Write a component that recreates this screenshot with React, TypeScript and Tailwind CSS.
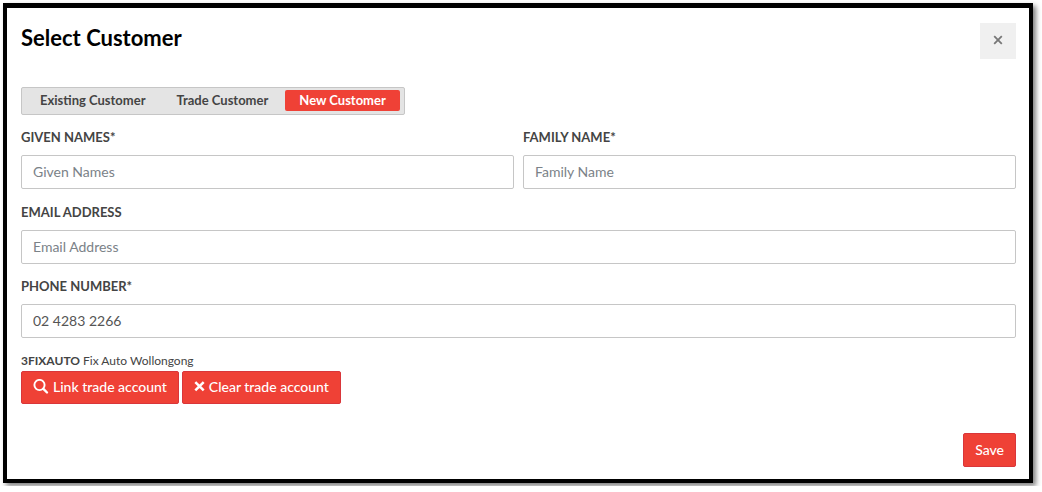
import React, { useState } from "react";
import { clsx } from "clsx";

interface FieldProps {
  id: string;
  label: string;
  placeholder?: string;
  type?: string;
  defaultValue?: string;
}

const TABS = ["Existing Customer", "Trade Customer", "New Customer"];

function Field({ id, label, placeholder, type = "text", defaultValue }: FieldProps) {
  return (
    <div className="flex min-w-0 flex-1 flex-col gap-2.5">
      <label htmlFor={id} className="text-[13px] leading-4 font-bold text-[#444] uppercase">
        {label}
      </label>
      <input
        id={id}
        type={type}
        placeholder={placeholder}
        defaultValue={defaultValue}
        className="h-[34px] w-full rounded-xs border border-[#c6c6c6] bg-white px-[11px] pb-0.5 text-[14px] text-[#555] placeholder:text-[#7b8288]"
      />
    </div>
  );
}

function SearchIcon() {
  return (
    <svg viewBox="0 0 16 16" className="size-4" fill="none" stroke="currentColor" aria-hidden="true">
      <circle cx="6.5" cy="6" r="5.1" strokeWidth="1.9" />
      <path d="M10.4 9.9 14 13.5" strokeWidth="2.4" strokeLinecap="round" />
    </svg>
  );
}

function ClearIcon() {
  return (
    <svg viewBox="0 0 10 10" className="size-[11px]" fill="none" stroke="currentColor" aria-hidden="true">
      <path d="M1.2 1 8.8 8.6M8.8 1 1.2 8.6" strokeWidth="2.3" />
    </svg>
  );
}

export default function App() {
  const [activeTab, setActiveTab] = useState("New Customer");

  const redButton =
    "flex items-center gap-1 rounded-xs border border-[#d9363a] bg-[#ef4136] px-[11px] pb-0.5 text-[14px] font-medium text-white";

  return (
    <div className="bg-white p-[3px] pr-[9px] font-[Lato,sans-serif] text-[#444]">
      <div
        role="dialog"
        aria-labelledby="dialog-title"
        className="border-4 border-t-5 border-black bg-white px-[14px] pt-[15px] pr-[13px] pb-3 shadow-[3px_3px_5px_rgba(0,0,0,0.5)]"
      >
        <header className="flex items-start justify-between">
          <h1 id="dialog-title" className="text-[22px] leading-[30px] font-bold text-black">
            Select Customer
          </h1>
          <button type="button" aria-label="Close" className="flex size-9 items-center justify-center bg-[#f0f0f0] pb-0.5 text-[#777]">
            <svg viewBox="0 0 10 10" className="size-2.5" fill="none" stroke="currentColor" aria-hidden="true">
              <path d="M1.2 1.2 8.8 8.8M8.8 1.2 1.2 8.8" strokeWidth="1.8" />
            </svg>
          </button>
        </header>

        <div role="tablist" className="mt-7 flex h-7 w-fit gap-[3px] rounded-xs border border-[#c6c6c6] bg-[#e4e4e4] px-1 pt-0.5">
          {TABS.map((tab) => (
            <button
              key={tab}
              type="button"
              role="tab"
              aria-selected={tab === activeTab}
              onClick={() => setActiveTab(tab)}
              className={clsx(
                "h-[21px] rounded-xs px-3.5 pb-0.5 text-[13px] leading-4 font-bold",
                tab === activeTab ? "bg-[#ef4136] text-white" : "text-[#444]"
              )}
            >
              {tab}
            </button>
          ))}
        </div>

        <form className="mt-3.5" onSubmit={(e) => e.preventDefault()}>
          <div className="flex flex-col gap-3.5">
            <div className="mb-px flex gap-[9px]">
              <Field id="given-names" label="Given Names*" placeholder="Given Names" />
              <Field id="family-name" label="Family Name*" placeholder="Family Name" />
            </div>
            <Field id="email" label="Email Address" placeholder="Email Address" type="email" />
            <Field id="phone" label="Phone Number*" type="tel" defaultValue="02 4283 2266" />
          </div>

          <p className="mt-3.5 mb-px text-[12px] leading-[18px]">
            <strong className="font-bold">3FIXAUTO</strong> Fix Auto Wollongong
          </p>
          <div className="flex gap-[3px]">
            <button type="button" className={clsx(redButton, "h-[33px]")}>
              <SearchIcon />
              Link trade account
            </button>
            <button type="button" className={clsx(redButton, "h-[33px]")}>
              <ClearIcon />
              Clear trade account
            </button>
          </div>

          <div className="mt-[29px] flex justify-end">
            <button type="submit" className={clsx(redButton, "h-[34px]")}>
              Save
            </button>
          </div>
        </form>
      </div>
    </div>
  );
}
